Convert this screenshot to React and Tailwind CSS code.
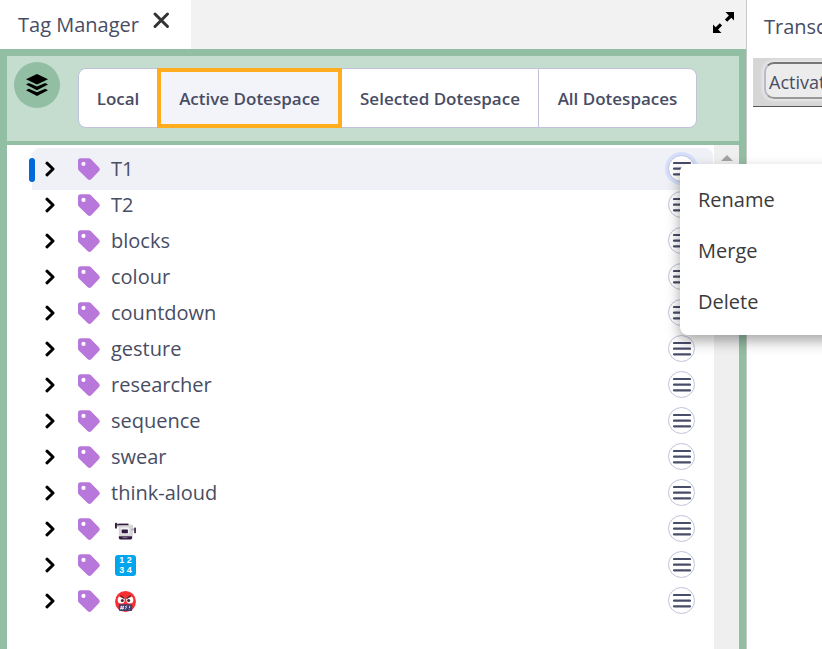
import React from "react";

const scopes = [
  { name: "Local", style: "w-20 rounded-l-lg border border-[#c0c2da] bg-white" },
  { name: "Active Dotespace", style: "z-10 -ml-px w-[185px] border-4 border-[#ffad1f] bg-[#f3f4f9]" },
  { name: "Selected Dotespace", style: "-ml-px w-[198px] border border-[#c0c2da] bg-white" },
  { name: "All Dotespaces", style: "-ml-px w-[159px] rounded-r-lg border border-[#c0c2da] bg-white" },
];

const tags = [
  { name: "T1", selected: true },
  { name: "T2" },
  { name: "blocks" },
  { name: "colour" },
  { name: "countdown" },
  { name: "gesture" },
  { name: "researcher" },
  { name: "sequence" },
  { name: "swear" },
  { name: "think-aloud" },
  { name: "video camera", icon: CameraIcon },
  { name: "numbers", icon: NumbersIcon },
  { name: "swearing face", icon: SwearingIcon },
];

function CameraIcon() {
  return (
    <svg className="size-[21px]" viewBox="0 0 22 22" aria-hidden="true">
      <rect x="1" y="5" width="13" height="2" fill="#321b41" />
      <rect x="0" y="4" width="2" height="6" rx="0.7" fill="#321b41" />
      <rect x="2" y="6" width="2" height="2" fill="#9b9b9b" />
      <rect x="4" y="6" width="15" height="12" rx="1.5" fill="#d8d6d8" />
      <rect x="4" y="5" width="10" height="1.5" fill="#321b41" />
      <rect x="6" y="9" width="9" height="7" rx="1" fill="#f4f4f4" />
      <rect x="7" y="11" width="6.500" height="4" rx="0.7" fill="#321b41" />
      <rect x="17" y="10" width="3" height="2" fill="#b5b1b8" />
      <rect x="20" y="9" width="2" height="6" rx="0.5" fill="#4b3758" />
      <path d="M4 18h14v2q0 1.500-1.500 1.500h-11q-1.500 0-1.500-1.500z" fill="#321b41" />
      <rect x="8" y="19" width="5" height="1" fill="#8a7a94" />
    </svg>
  );
}

function NumbersIcon() {
  return (
    <span
      className="grid size-[21px] grid-cols-2 justify-items-center rounded-[3px] bg-[#00a6ed] px-[3px] font-['Liberation_Sans',sans-serif] text-[9px] leading-[10px] font-bold text-white"
      aria-hidden="true"
    >
      <span>1</span>
      <span>2</span>
      <span>3</span>
      <span>4</span>
    </span>
  );
}

function SwearingIcon() {
  return (
    <svg className="size-[21px]" viewBox="0 0 22 22" aria-hidden="true">
      <circle cx="11" cy="11" r="11" fill="#f92f33" />
      <circle cx="6.500" cy="9.300" r="3.700" fill="#fff" />
      <circle cx="15.500" cy="9.300" r="3.700" fill="#fff" />
      <circle cx="7.700" cy="10" r="1.600" fill="#402a32" />
      <circle cx="14.300" cy="10" r="1.600" fill="#402a32" />
      <path d="M4.500 6l5 2.200 0.500-2.200-3-1.500zM17.500 6l-5 2.200-0.500-2.200 3-1.500z" fill="#f92f33" />
      <path d="M6 5l3.500 2.500M16 5l-3.500 2.500" stroke="#402a32" strokeWidth="1.200" strokeLinecap="round" />
      <rect x="4" y="14" width="14" height="7" rx="1.300" fill="#433b6b" />
      <path
        d="M7 15.500l-1 4M9 15.500l-1 4M5.500 16.700h4M5.300 18.300h4M12.700 15.700l-1.700 0.500 1 1.500-1.700 1.500M15.500 15.500l-0.500 2.500M14.800 19.200v0.500"
        fill="none"
        stroke="#fff"
        strokeWidth="0.800"
      />
    </svg>
  );
}

function TagIcon() {
  return (
    <svg className="ml-[23px] size-[22px] shrink-0" viewBox="0 0 22 22" aria-hidden="true">
      <path
        fillRule="evenodd"
        d="M2.500 0.300h8.300q1.300 0 2.200 0.900l8 8.400q1.500 1.800 0 3.500l-7.800 8.100q-1.700 1.600-3.400 0L1 12.800Q0 11.800 0 10.600V2.800Q0 0.300 2.500 0.300zM5.500 3.800a2.100 2.100 0 1 0 0 4.200a2.100 2.100 0 1 0 0-4.200z"
        fill="#b877db"
      />
    </svg>
  );
}

function TagRow({ tag }) {
  const Icon = tag.icon;
  return (
    <li
      className={
        tag.selected
          ? "relative -mb-[3px] flex h-[42px] items-center rounded-t-lg bg-[#f0f1f6] pr-[18px] pl-[13px]"
          : "flex h-9 items-center pr-[18px] pl-[13px]"
      }
    >
      {tag.selected && <span className="absolute top-[10px] -left-[3px] h-6 w-[6px] rounded-[3px] bg-[#0068da]" />}
      <button type="button" aria-label={`Expand ${tag.name}`} className="shrink-0">
        <svg className="h-4 w-[10px]" viewBox="0 0 10 16" aria-hidden="true">
          <path d="M2 2.200L8 8l-6 5.800" fill="none" stroke="#000" strokeWidth="3" strokeLinecap="round" strokeLinejoin="round" />
        </svg>
      </button>
      <TagIcon />
      {Icon ? (
        <span className="ml-[15px]" role="img" aria-label={tag.name}>
          <Icon />
        </span>
      ) : (
        <span className="ml-[11px] text-[20px] leading-7">{tag.name}</span>
      )}
      <div className="relative ml-auto pb-0.5">
        <button
          type="button"
          aria-label={`Options for ${tag.name}`}
          className={
            tag.selected
              ? "flex size-[27px] items-center justify-center rounded-full border border-[#c0c2da] bg-white ring-[3px] ring-[#d5dffc]"
              : "flex size-[27px] items-center justify-center rounded-full border border-[#c0c2da] bg-white"
          }
        >
          <svg className="h-[15px] w-[18px] shrink-0" viewBox="0 0 18 15" aria-hidden="true">
            <path d="M1 2h16M1 7.700h16M1 13.300h16" stroke="#484d69" strokeWidth="2.200" strokeLinecap="round" />
          </svg>
        </button>
        {tag.selected && <TagMenu />}
      </div>
    </li>
  );
}

function TagMenu() {
  return (
    <div
      role="menu"
      className="absolute top-[9px] left-3 z-20 flex w-[180px] flex-col rounded-lg bg-white pt-[11px] pb-[7px] shadow-[0_6px_14px_rgba(0,0,0,0.35)]"
    >
      {["Rename", "Merge", "Delete"].map((item) => (
        <button key={item} type="button" role="menuitem" className="h-[51px] px-[18px] text-left text-[20px] leading-7 text-[#3b3b3b]">
          {item}
        </button>
      ))}
    </div>
  );
}

export default function App() {
  return (
    <div className="flex h-screen overflow-hidden bg-white font-['Open_Sans','Noto_Sans',sans-serif] text-[#484d64]">
      <section className="flex min-w-0 flex-1 flex-col border-r border-[#c8c8c8]">
        <div className="flex h-[49px] shrink-0 items-start bg-[#f2f2f2]">
          <div className="flex h-full w-[191px] items-start bg-white pt-[11px] pl-[18px]">
            <h1 className="w-[134px] text-[20px] leading-7 whitespace-nowrap">Tag Manager</h1>
            <button type="button" aria-label="Close Tag Manager">
              <svg className="size-[18px]" viewBox="0 0 18 18" aria-hidden="true">
                <path d="M3 3l12.500 12.500M15.500 3L3 15.500" stroke="#333" strokeWidth="3" strokeLinecap="round" />
              </svg>
            </button>
          </div>
          <button type="button" aria-label="Maximise" className="mt-3 mr-3 ml-auto">
            <svg className="size-[21px]" viewBox="0 0 21 21" aria-hidden="true">
              <path d="M12.500 0H21v8.500l-2.700-2.700-4.100 3.900-2.300-2.300 4-4zM8.500 21H0v-8.500l2.700 2.700 4.100-3.900 2.300 2.300-4 4z" />
            </svg>
          </button>
        </div>

        <div className="flex min-h-0 flex-1 flex-col border-x-[7px] border-t-[7px] border-[#92bea3]">
          <header className="flex h-[89px] shrink-0 items-start border-b-4 border-[#92bea3] bg-[#c5ddcf] pt-[6px] pl-[7px]">
            <button type="button" aria-label="Layers" className="flex size-[46px] items-center justify-center rounded-full bg-[#92bea3]">
              <svg className="size-[22px]" viewBox="0 0 22 22" aria-hidden="true">
                <path d="M11 0L22 5.200 11 10.400 0 5.200z" />
                <path d="M0 10.600l2.800-1.600L11 12.600l8.200-3.600L22 10.600 11 16.200z" />
                <path d="M0 16.300l2.800-1.600L11 18.300l8.200-3.600L22 16.300 11 22z" />
              </svg>
            </button>
            <nav aria-label="Dotespace scope" className="mt-[6px] ml-[18px] flex h-[60px] text-[17px] leading-6 font-semibold">
              {scopes.map((scope) => (
                <button key={scope.name} type="button" className={`relative shrink-0 pt-0.5 whitespace-nowrap ${scope.style}`}>
                  {scope.name}
                </button>
              ))}
            </nav>
          </header>

          <div className="flex min-h-0 flex-1">
            <ul className="min-w-0 flex-1 pt-[3px] pr-px pl-[25px]">
              {tags.map((tag) => (
                <TagRow key={tag.name} tag={tag} />
              ))}
            </ul>
            <div className="flex w-[25px] shrink-0 justify-center bg-[#efefef] pt-[10px]">
              <svg className="h-[6px] w-[12px]" viewBox="0 0 12 6" aria-hidden="true">
                <path d="M6 0l6 6H0z" fill="#a3a3a3" />
              </svg>
            </div>
          </div>
        </div>
      </section>

      <section className="w-[75px] shrink-0 overflow-hidden pl-[6px]">
        <h2 className="mb-[18px] pt-[13px] pl-[11px] text-[20px] leading-7 whitespace-nowrap">Transc</h2>
        <div className="-mt-px h-[49px] border-b border-[#555] bg-[#d6d6d6] pt-1 pl-[11px]">
          <button
            type="button"
            className="h-[37px] w-[100px] rounded-[10px] border-2 border-t-[#777] border-r-[#777] border-b-[#999] border-l-[#b8bac8] bg-[#ececec] pt-0.5 pl-[3px] text-left text-[18px] leading-7 shadow-[0_0_3px_2px_#e8e8e8]"
          >
            Activat
          </button>
        </div>
      </section>
    </div>
  );
}
